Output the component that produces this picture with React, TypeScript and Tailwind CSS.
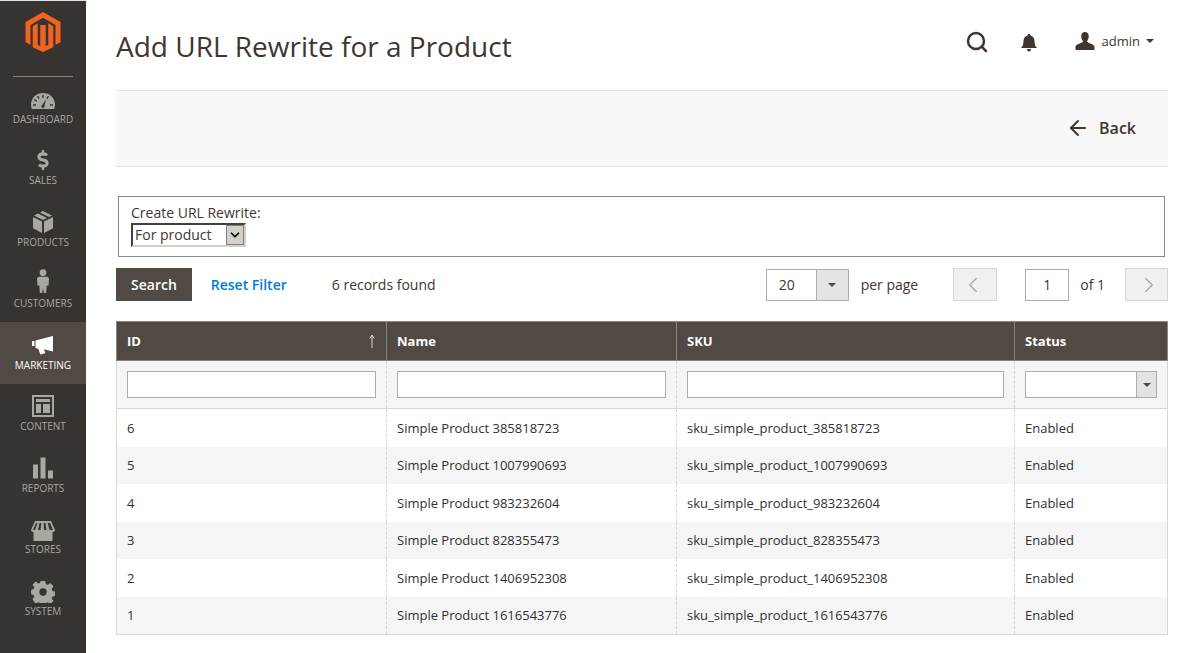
import { ArrowLeft, ChevronDown, ChevronLeft, ChevronRight, Search } from "lucide-react";
import type { ReactNode } from "react";
import { FaDollarSign } from "react-icons/fa";

const font = { fontFamily: '"Open Sans", sans-serif' };
const cols = "grid grid-cols-[270px_290px_338px_1fr]";

const rows = [
	["6", "385818723"],
	["5", "1007990693"],
	["4", "983232604"],
	["3", "828355473"],
	["2", "1406952308"],
	["1", "1616543776"],
];

const menu: { label: string; active?: boolean; icon: ReactNode }[] = [
	{
		label: "DASHBOARD",
		icon: (
			<svg viewBox="0 0 24 16" className="mt-1 h-4 w-6 fill-current">
				<path
					fillRule="evenodd"
					d="M12 0C5.400 0 .5 4.600 0 11c0 1.800.3 3.500.8 5h22.400c.5-1.500.8-3.200.8-5C23.500 4.600 18.600 0 12 0zM11.300 2h1.400v3h-1.400V2zM6 3.400l1.200-.7 1.500 2.600-1.200.7L6 3.400zm10.800-.7l1.200.7-1.500 2.600-1.200-.7 1.500-2.600zM2.800 7.200l.7-1.200 2.600 1.500-.7 1.200-2.600-1.500zM14.800 6.500l-1.300 6.300c.3.800-.1 1.700-.9 2-.9.300-1.800 0-2.100-.9-.3-.8.100-1.600.8-2l3.500-5.400zM2 11.300h3v1.400H2v-1.400zm17 0h3v1.400h-3v-1.400z"
				/>
			</svg>
		),
	},
	{
		label: "SALES",
		icon: <FaDollarSign className="h-5 w-3.5" />,
	},
	{
		label: "PRODUCTS",
		icon: (
			<svg viewBox="0 0 20 22" className="h-5.5 w-5 fill-current">
				<path d="M10 0l9 4.500-3 1.600-9-4.600L10 0zM5 2.500l9 4.600L10 9 1 4.500l4-2zM0 6l9 4.600V22L0 17.200V6zm20 0v11.200L11 22V10.600L20 6z" />
			</svg>
		),
	},
	{
		label: "CUSTOMERS",
		icon: (
			<svg viewBox="0 0 14 26" className="mb-1 h-6 w-3.5 fill-current">
				<circle cx="7" cy="4" r="3.600" />
				<path d="M3 8.500h8c1.600 0 2.500 1 2.500 2.500l-.5 7h-2l-.6 8H8l-1-5-1 5H3.600l-.6-8H1l-.5-7C.5 9.500 1.400 8.500 3 8.500z" />
			</svg>
		),
	},
	{
		label: "MARKETING",
		active: true,
		icon: (
			<svg viewBox="0 0 24 20" className="h-5 w-6 fill-current">
				<path d="M1 6h2.500v5H1zM4.500 5.500L22 1v15.500l-9-2.200 1.300 4-5 1.200-2-5.800-2.800-.7z" />
			</svg>
		),
	},
	{
		label: "CONTENT",
		icon: (
			<svg viewBox="0 0 22 22" className="h-5.5 w-5.5 fill-current">
				<path
					fillRule="evenodd"
					d="M0 0h22v22H0V0zm2 2v18h18V2H2zm2 2h14v3H4V4zm0 5h5v9H4V9zm7 0h7v9h-7V9z"
				/>
			</svg>
		),
	},
	{
		label: "REPORTS",
		icon: (
			<svg viewBox="0 0 20 21" className="h-5.5 w-5 fill-current">
				<path d="M0 7h5v14H0zM7.500 0h5v21h-5zM15 13h5v8h-5z" />
			</svg>
		),
	},
	{
		label: "STORES",
		icon: (
			<svg viewBox="0 0 24 20" className="mt-1 h-5 w-6 fill-current">
				<path d="M4 0h16l4 9c0 1.500-1.500 2-2.500 2v9h-19v-9C1.500 11 0 10.500 0 9l4-9zm1 2L2 9h2l2.500-7H5zm3.500 0L7 9h2.500l.8-7H8.500zm4.200 0l.3 7h2.500l-1-7h-1.800zm4 0l1.800 7H22l-3-7h-2.300z" />
			</svg>
		),
	},
	{
		label: "SYSTEM",
		icon: (
			<svg viewBox="-1 0 26 24" className="mt-0.5 h-5.5 w-6 fill-current">
				<path
					fillRule="evenodd"
					d="M9.500 0h5l.6 3.400 2 .9L20 2.300 23.500 6l-2 2.800.8 2 2.700.6v5l-2.700.6-.9 2 2 2.800-3.600 3.500-2.800-2-2 .8-.6 3.100h-5l-.6-3.300-2-.8-2.800 2L.5 20l2-2.800-.9-2L-1 14.500v-5l2.600-.6.900-2-2-2.800L4 .6l2.900 2 2-.8L9.500 0zM12 8a4 4 0 100 8 4 4 0 000-8z"
				/>
			</svg>
		),
	},
];

function Logo() {
	return (
		<svg viewBox="0 0 35 40" className="h-10 w-9 fill-[#f26322]">
			<path d="M17.500 0L35 10v20l-5 2.900V12.900L17.500 5.700 5 12.900v20L0 30V10z" />
			<path d="M7.200 14.200l5-2.900v21.500l2.600 1.500V13h5.400v21.300l2.600-1.500V11.300l5 2.900v21L17.500 40 7.200 35.200z" />
		</svg>
	);
}

function DropArrow() {
	return <span className="h-0 w-0 border-x-4 border-t-4 border-x-transparent border-t-[#514943]" />;
}

export default function App() {
	return (
		<div className="flex min-h-screen bg-white text-sm text-[#41362f]" style={font}>
			<aside className="flex w-21.5 shrink-0 flex-col border-t border-[#e3e3e3] bg-[#373330]">
				<div className="mx-3.25 -mb-px flex h-19 justify-center border-b border-[#8a837f] pt-2.75">
					<Logo />
				</div>
				{menu.map((item) => (
					<div
						key={item.label}
						className={`flex h-[61.5px] flex-col items-center justify-end pb-2.5 ${
							item.active ? "bg-[#514943] text-white" : "text-[#aaa6a0]"
						}`}
					>
						<div className="flex h-6 items-center justify-center">{item.icon}</div>
						<span className="text-[10px] leading-4.25">{item.label}</span>
					</div>
				))}
			</aside>

			<main className="min-w-0 flex-1 pr-3.75 pl-7.5">
				<header className="flex h-22.5 items-center">
					<h1 className="mt-0.5 text-[28px] leading-9 text-[#41362f]">Add URL Rewrite for a Product</h1>
					<div className="ml-auto flex items-center pr-3.5 pb-2 text-[#41362f]">
						<Search className="mt-0.5 h-6 w-6" strokeWidth={2.5} />
						<svg viewBox="0 0 16 18" className="mt-0.75 ml-8 h-4.5 w-4 fill-current">
							<path d="M8 0c1 0 1.500.6 1.500 1.400C12 2 13.500 4 13.500 7c0 4 1 5.500 2.500 7H0c1.500-1.500 2.500-3 2.500-7 0-3 1.500-5 4-5.600C6.500.6 7 0 8 0zM6 15h4c0 1.200-.8 2.500-2 2.500S6 16.200 6 15z" />
						</svg>
						<svg viewBox="0 0 20 19" className="ml-9.5 h-4.5 w-5 fill-current">
							<path d="M10 0c2.600 0 4 1.800 4 4.500 0 2-.8 3.700-1.800 5 .1 1 .6 1.500 2 2 2.500 1 5.800 2 5.800 4V19H0v-3.500c0-2 3.300-3 5.800-4 1.400-.5 1.900-1 2-2C6.800 8.200 6 6.500 6 4.500 6 1.800 7.400 0 10 0z" />
						</svg>
						<span className="ml-1.75 text-[13px]">admin</span>
						<span className="ml-1.5 h-0 w-0 border-x-4 border-t-4 border-x-transparent border-t-[#41362f]" />
					</div>
				</header>

				<div className="flex h-19.25 items-center justify-end border-y border-[#e3e3e3] bg-[#f8f8f8] pr-8 pb-0.5">
					<ArrowLeft className="h-6 w-6" />
					<span className="ml-2.25 text-base font-semibold">Back</span>
				</div>

				<div className="mt-7.25 mr-0.75 ml-0.5 h-15.25 border border-[#8a8a8a] pt-1.5 pl-3">
					<div className="text-sm leading-5">Create URL Rewrite:</div>
					<div className="flex h-6 w-28.75 items-center border-2 border-t-[#404040] border-r-[#d4d0c8] border-b-[#d4d0c8] border-l-[#404040] bg-white pl-0.5">
						<span className="flex-1 text-sm">For product</span>
						<span className="flex h-5 w-4.5 items-center justify-center border border-[#808080] bg-[#d4d0c8]">
							<ChevronDown className="h-3.5 w-3.5 text-black" strokeWidth={3} />
						</span>
					</div>
				</div>

				<div className="mt-2.75 flex h-8.25 items-center">
					<button className="h-full bg-[#514943] px-3.75 font-semibold text-white">Search</button>
					<a className="ml-4.75 font-semibold text-[#007bdb]">Reset Filter</a>
					<span className="ml-11.25">6 records found</span>

					<div className="ml-auto flex h-8 w-20.75 border border-[#adadad]">
						<span className="flex-1 pl-3 leading-7.5">20</span>
						<span className="flex w-8 items-center justify-center border-l border-[#adadad] bg-[#e3e3e3]">
							<DropArrow />
						</span>
					</div>
					<span className="ml-3">per page</span>
					<button className="ml-8.75 flex h-full w-11 items-center justify-center border border-[#d6d6d6] bg-[#f0f0f0] pr-1 text-[#a8a8a8]">
						<ChevronLeft className="h-6.5 w-6.5" strokeWidth={1.25} />
					</button>
					<div className="ml-7 flex h-8 w-11 items-center justify-center border border-[#adadad]">1</div>
					<span className="ml-2.75">of 1</span>
					<button className="ml-5 flex h-full w-10.75 items-center justify-center border border-[#d6d6d6] bg-[#f0f0f0] pl-1 text-[#a8a8a8]">
						<ChevronRight className="h-6.5 w-6.5" strokeWidth={1.25} />
					</button>
				</div>

				<div className="mt-5 border-x border-b border-[#d6d6d6] text-[13px] text-[#303030]">
					<div className={`${cols} -mx-px h-10 bg-[#514943] font-bold text-white`}>
						{["ID", "Name", "SKU", "Status"].map((title, i) => (
							<div
								key={title}
								className="flex items-center justify-between border-y border-l border-[#8a837f] px-2.5 last:border-r"
							>
								{title}
								{i === 0 && (
									<svg viewBox="0 0 8 14" className="h-3.5 w-2 fill-none stroke-[#d6d6d6]">
										<path d="M4 14V1M1.800 4.500L4 1l2.200 3.500" />
									</svg>
								)}
							</div>
						))}
					</div>
					<div className={`${cols} h-12 border-b border-[#d6d6d6] bg-[#f5f5f5]`}>
						{[0, 1, 2].map((i) => (
							<div key={i} className="flex items-center border-r border-dashed border-[#d6d6d6] px-2.5">
								<input className="h-6.75 w-full border border-[#adadad] bg-white" />
							</div>
						))}
						<div className="flex items-center px-2.5">
							<div className="flex h-6.75 w-full justify-end border border-[#adadad] bg-white">
								<span className="flex w-5 items-center justify-center border-l border-[#adadad] bg-[#e3e3e3]">
									<DropArrow />
								</span>
							</div>
						</div>
					</div>
					<div className="grid h-56.25 auto-rows-fr">
						{rows.map(([id, num], i) => (
							<div key={id} className={`${cols} ${i % 2 ? "bg-[#f5f5f5]" : "bg-white"}`}>
								{[id, `Simple Product ${num}`, `sku_simple_product_${num}`].map((text) => (
									<div
										key={text}
										className="flex items-center border-r border-dashed border-[#d6d6d6] px-2.5 pt-px"
									>
										{text}
									</div>
								))}
								<div className="flex items-center px-2.5 pt-px">Enabled</div>
							</div>
						))}
					</div>
				</div>
			</main>
		</div>
	);
}
